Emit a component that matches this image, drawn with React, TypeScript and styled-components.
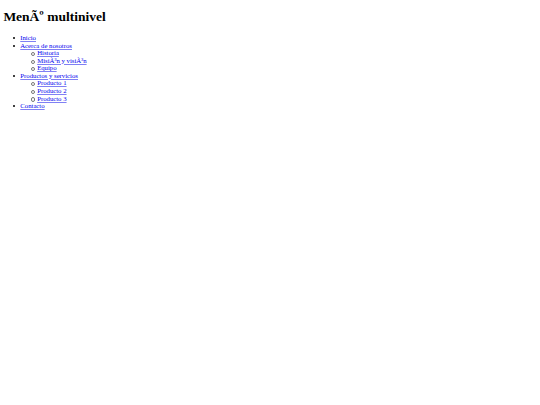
import styled, { createGlobalStyle } from "styled-components";

// page was shot at 1280px and shrunk to 540px, so every size is 16px * 0.421875
const GlobalStyle = createGlobalStyle`
    html, body {
        margin: 0;
        padding: 0;
        background: #ffffff;
    }
    body {
        font-family: "Liberation Serif", "Times New Roman", serif;
        font-size: 6.75px;
        color: #000000;
    }
`

const menu = [
    { label: "Inicio" },
    { label: "Acerca de nosotros", children: ["Historia", "MisiÃ³n y visiÃ³n", "Equipo"] },
    { label: "Productos y servicios", children: ["Producto 1", "Producto 2", "Producto 3"] },
    { label: "Contacto" },
];

function App() {
    return (
        <>
            <GlobalStyle/>
            <Page>
                <Title>MenÃº multinivel</Title>
                <Menu>
                    {menu.map(item => (
                        <Item key={item.label}>
                            <Link href="#">{item.label}</Link>
                            {item.children && (
                                <SubMenu>
                                    {item.children.map(child => (
                                        <Item key={child} $hollow>
                                            <Link href="#">{child}</Link>
                                        </Item>
                                    ))}
                                </SubMenu>
                            )}
                        </Item>
                    ))}
                </Menu>
            </Page>
        </>
    )
}

const Page = styled.div`
    padding: 0 3.375px;
    display: flow-root;
`

const Title = styled.h1`
    font-size: 13.5px;
    font-weight: bold;
    margin: 9.05px 0;
`

const Menu = styled.ul`
    list-style: none;
    margin: 6.75px 0;
    padding-left: 16.875px;
`

const SubMenu = styled.ul`
    list-style: none;
    margin: 0;
    padding-left: 16.875px;
`

const Item = styled.li<{ $hollow?: boolean }>`
    position: relative;
    line-height: 7.56px;

    &::before {
        content: "";
        position: absolute;
        top: 2.9px;
        left: ${p => p.$hollow ? "-6.6px" : "-7.2px"};
        width: ${p => p.$hollow ? "2.1px" : "2.3px"};
        height: ${p => p.$hollow ? "2.1px" : "2.3px"};
        border-radius: 50%;
        box-sizing: content-box;
        background: ${p => p.$hollow ? "transparent" : "#000000"};
        border: ${p => p.$hollow ? "0.5px solid #777777" : "none"};
    }
`

const Link = styled.a`
    color: #0000ee;
    text-decoration: underline;
    text-decoration-color: #8080f4;
    text-decoration-thickness: 0.45px;
    text-underline-offset: 0.6px;
`

export default App;
